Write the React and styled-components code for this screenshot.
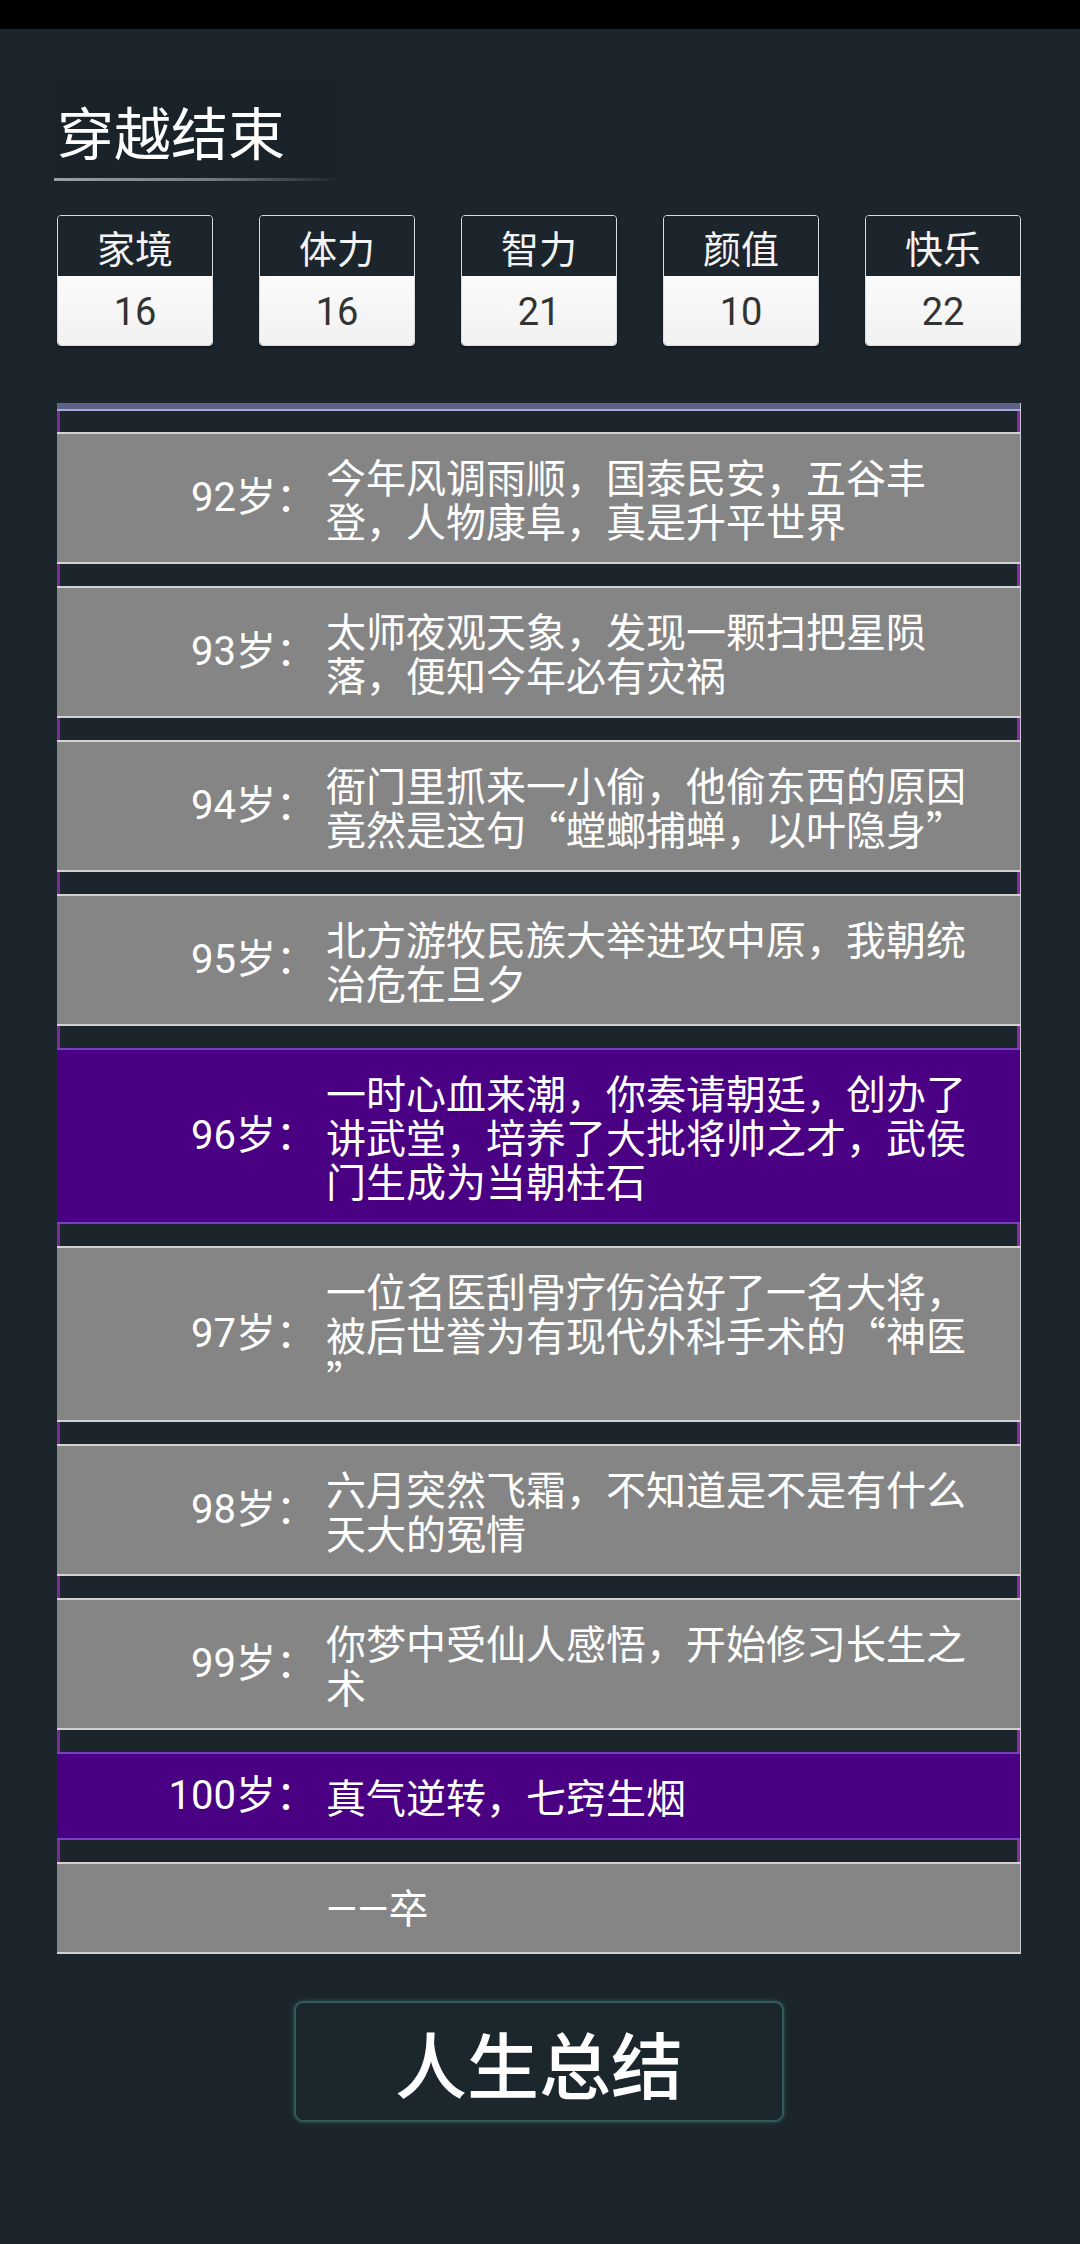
import React from 'react';
import styled, { createGlobalStyle } from 'styled-components';

const GlobalStyle = createGlobalStyle`
  html, body {
    margin: 0;
    padding: 0;
    background: #1c252c;
  }
  body {
    font-family: Roboto, "Noto Sans CJK SC", sans-serif;
    color: #fff;
  }
`;

const Page = styled.div`
  min-height: 2244px;
  background: #1c252c;
  display: flex;
  flex-direction: column;
`;

const StatusBar = styled.div`
  height: 29px;
  background: #000;
`;

const Content = styled.div`
  display: flex;
  flex-direction: column;
  padding: 49px 59px 0 57px;
`;

const TitleBox = styled.div`
  align-self: flex-start;
  width: 289px;
  margin-left: -3px;
  height: 103px;
  display: flex;
  flex-direction: column;
  justify-content: flex-end;
  background: rgba(0, 0, 0, 0.05);
`;

const Title = styled.h1`
  margin: 0 0 16px 3px;
  font-family: "Noto Sans CJK SC", sans-serif;
  font-weight: 400;
  font-size: 57px;
  line-height: 64px;
  color: #fff;
`;

const TitleLine = styled.div`
  height: 3px;
  background: linear-gradient(to right, #9aa1a8, #737a81 55%, rgba(115, 122, 129, 0));
`;

const StatsRow = styled.div`
  display: grid;
  grid-template-columns: repeat(5, 156px);
  justify-content: space-between;
  margin-top: 34px;
`;

const StatBox = styled.div`
  display: flex;
  flex-direction: column;
  border: 1px solid #d9dde0;
  border-radius: 4px;
  overflow: hidden;
  box-shadow: 0 2px 3px rgba(0, 0, 0, 0.4);
`;

const StatLabel = styled.div`
  height: 60px;
  display: flex;
  align-items: center;
  justify-content: center;
  background: #1c252c;
  font-family: "Noto Sans CJK SC", sans-serif;
  font-size: 38px;
  color: #f4f4f4;
`;

const StatValue = styled.div`
  height: 69px;
  padding-top: 3px;
  box-sizing: border-box;
  display: flex;
  align-items: center;
  justify-content: center;
  background: linear-gradient(#fbfbfb, #f1f1f1);
  font-family: Roboto, sans-serif;
  font-size: 38px;
  color: #333;
`;

const List = styled.div`
  margin-top: 57px;
  display: flex;
  flex-direction: column;
  border-right: 1px solid #c9c9cf;
`;

const TopCap = styled.div`
  height: 6px;
  background: #5d628a;
  border-bottom: 2px solid #a6a8d6;
`;

const Gap = styled.div`
  height: ${p => p.$h}px;
  background: #1c252c;
  border-left: 3px solid #7b2a98;
  border-right: 3px solid #8a2aa6;
`;

const Item = styled.div`
  display: flex;
  align-items: center;
  padding: 20px 0;
  background: ${p => (p.$hl ? '#4a0082' : '#858585')};
  border-top: 2px solid ${p => (p.$hl ? '#7a3fc4' : '#d2d2d2')};
  border-bottom: 2px solid ${p => (p.$hl ? '#7a3fc4' : '#d2d2d2')};
`;

const Age = styled.div`
  flex: 0 0 259px;
  margin-right: 10px;
  text-align: right;
  font-family: Roboto, "Noto Sans CJK SC", sans-serif;
  font-size: 40px;
  line-height: 44px;
  color: #fff;
`;

const Event = styled.div`
  flex: 1;
  white-space: pre-line;
  font-family: "Noto Sans CJK SC", sans-serif;
  font-size: 40px;
  line-height: 44px;
  color: #fff;
`;

const Dash = styled.span`
  font-family: Roboto, sans-serif;
`;

const Footer = styled.div`
  display: flex;
  justify-content: center;
  margin-top: 47px;
`;

const SummaryButton = styled.button`
  width: 490px;
  height: 121px;
  background: #1c262d;
  border: 2px solid #2e5c5d;
  border-radius: 9px;
  box-shadow: 0 0 4px rgba(70, 150, 150, 0.45);
  color: #fff;
  font-family: "Noto Sans CJK SC", sans-serif;
  font-size: 72px;
  font-weight: 500;
  cursor: pointer;
`;

const stats = [
  { label: '家境', value: 16 },
  { label: '体力', value: 16 },
  { label: '智力', value: 21 },
  { label: '颜值', value: 10 },
  { label: '快乐', value: 22 },
];

const events = [
  { age: 92, text: '今年风调雨顺，国泰民安，五谷丰\n登，人物康阜，真是升平世界' },
  { age: 93, text: '太师夜观天象，发现一颗扫把星陨\n落，便知今年必有灾祸' },
  { age: 94, text: '衙门里抓来一小偷，他偷东西的原因\n竟然是这句“螳螂捕蝉，以叶隐身”' },
  { age: 95, text: '北方游牧民族大举进攻中原，我朝统\n治危在旦夕' },
  { age: 96, text: '一时心血来潮，你奏请朝廷，创办了\n讲武堂，培养了大批将帅之才，武侯\n门生成为当朝柱石', hl: true },
  { age: 97, text: '一位名医刮骨疗伤治好了一名大将，\n被后世誉为有现代外科手术的“神医\n”' },
  { age: 98, text: '六月突然飞霜，不知道是不是有什么\n天大的冤情' },
  { age: 99, text: '你梦中受仙人感悟，开始修习长生之\n术' },
  { age: 100, text: '真气逆转，七窍生烟', hl: true },
];

export default function App() {
  return (
    <Page lang="zh-CN">
      <GlobalStyle />
      <StatusBar />
      <Content>
        <TitleBox>
          <Title>穿越结束</Title>
          <TitleLine />
        </TitleBox>
        <StatsRow>
          {stats.map(s => (
            <StatBox key={s.label}>
              <StatLabel>{s.label}</StatLabel>
              <StatValue>{s.value}</StatValue>
            </StatBox>
          ))}
        </StatsRow>
        <List>
          <TopCap />
          {events.map((e, i) => (
            <React.Fragment key={e.age}>
              <Gap $h={i === 0 ? 21 : 22} />
              <Item $hl={e.hl}>
                <Age>{e.age}岁：</Age>
                <Event>{e.text}</Event>
              </Item>
            </React.Fragment>
          ))}
          <Gap $h={22} />
          <Item>
            <Age />
            <Event><Dash>——</Dash>卒</Event>
          </Item>
        </List>
        <Footer>
          <SummaryButton>人生总结</SummaryButton>
        </Footer>
      </Content>
    </Page>
  );
}
